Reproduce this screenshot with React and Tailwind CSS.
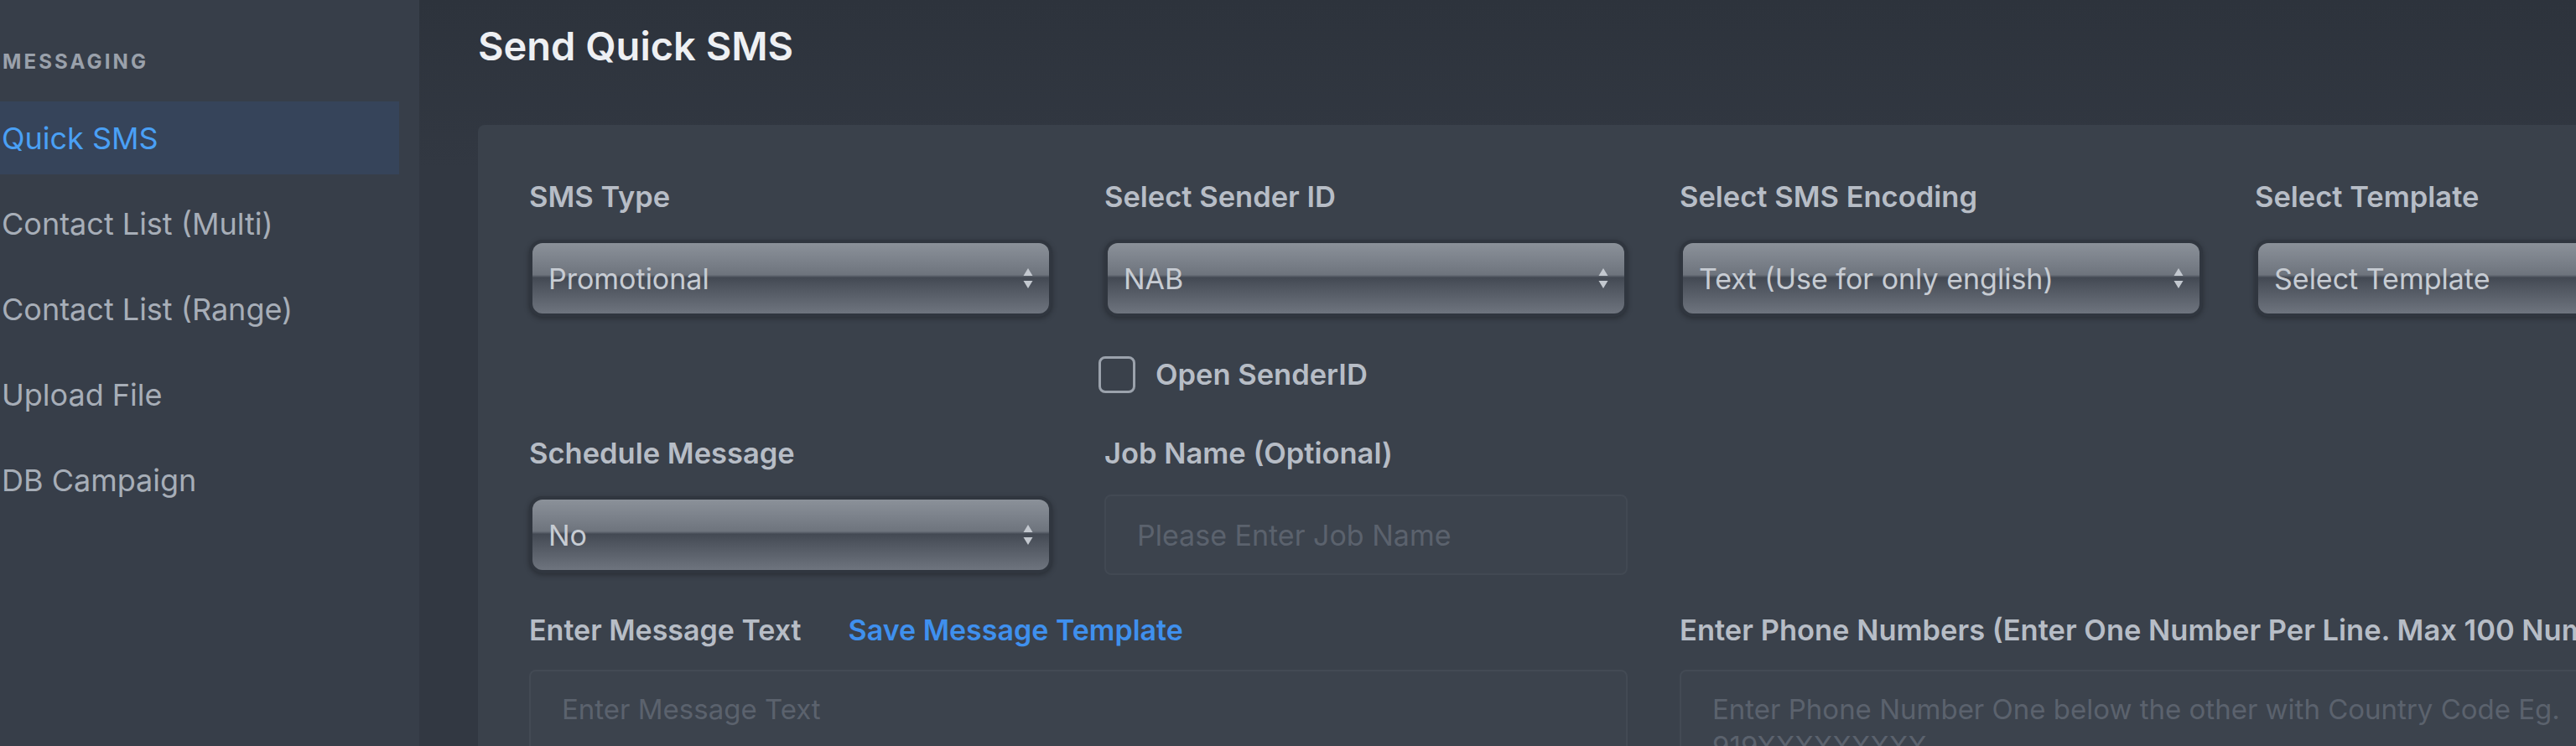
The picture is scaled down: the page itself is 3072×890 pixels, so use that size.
import React from 'react';

const navItems = ['Quick SMS', 'Contact List (Multi)', 'Contact List (Range)', 'Upload File', 'DB Campaign'];

const SelectArrows = () => (
  <svg width="14" height="28" viewBox="0 0 14 28" className="shrink-0">
    <path d="M7 2 L12.5 11 H1.5 Z" fill="#c3c8cf" />
    <path d="M7 26 L12.5 17 H1.5 Z" fill="#c3c8cf" />
  </svg>
);

const GlossySelect = ({ value }) => (
  <div className="h-[92px] rounded-[16px] bg-[#30363f] p-[4px] shadow-[0_2px_6px_rgba(0,0,0,0.3)]">
    <div className="h-full rounded-[12px] bg-[linear-gradient(to_bottom,#8b9199_0%,#7d838c_22%,#6e747d_45%,#434953_49%,#4f555f_62%,#6e747e_100%)] flex items-center justify-between pl-[19px] pr-[18px]">
      <span className="text-[34px] text-[#c7ccd3] whitespace-nowrap">{value}</span>
      <SelectArrows />
    </div>
  </div>
);

const Label = ({ children, className = '' }) => (
  <div className={`text-[34.5px] leading-[40px] font-semibold text-[#b7bdc6] whitespace-nowrap ${className}`}>{children}</div>
);

export default function App() {
  return (
    <div className="flex h-[890px] w-full overflow-hidden font-[Inter,sans-serif] bg-[#30363f]">
      <aside className="w-[500px] shrink-0 bg-[#373e49] pt-[59px]">
        <div className="h-[30px] leading-[30px] pl-[3px] text-[24px] font-bold tracking-[0.13em] text-[#9aa1ab]">MESSAGING</div>
        <nav className="mt-[32px] flex flex-col gap-[15px]">
          {navItems.map((item, i) => (
            <div
              key={item}
              className={`h-[87px] w-[476px] flex items-center pl-[2px] text-[36px] ${
                i === 0 ? 'bg-[#36445a] text-[#4aa0f5]' : 'text-[#a7aeb8]'
              }`}
            >
              {item}
            </div>
          ))}
        </nav>
      </aside>

      <main className="flex-1 min-w-0 pl-[70px] bg-[linear-gradient(to_bottom,#2d333c,#323842_200px)]">
        <h1 className="pt-[31px] text-[47px] leading-[48px] font-semibold text-[#eef0f3] whitespace-nowrap">Send Quick SMS</h1>

        <section className="mt-[70px] w-[2700px] h-[800px] bg-[#3a414b] rounded-tl-[8px] pl-[61px] pt-[66px]">
          {/* row 1 */}
          <div className="grid grid-cols-[repeat(4,624px)] gap-x-[62px]">
            <div>
              <Label>SMS Type</Label>
              <div className="mt-[31px]"><GlossySelect value="Promotional" /></div>
            </div>
            <div>
              <Label>Select Sender ID</Label>
              <div className="mt-[31px]"><GlossySelect value="NAB" /></div>
              <div className="mt-[47px] h-[44px] flex items-center gap-[24px] -ml-[7px]">
                <span className="w-[44px] h-[44px] rounded-[8px] border-[3px] border-[#9ba2ac]" />
                <Label>Open SenderID</Label>
              </div>
            </div>
            <div>
              <Label>Select SMS Encoding</Label>
              <div className="mt-[31px]"><GlossySelect value="Text (Use for only english)" /></div>
            </div>
            <div>
              <Label>Select Template</Label>
              <div className="mt-[31px]"><GlossySelect value="Select Template" /></div>
            </div>
          </div>

          {/* row 2 */}
          <div className="mt-[52px] grid grid-cols-[repeat(4,624px)] gap-x-[62px]">
            <div>
              <Label>Schedule Message</Label>
              <div className="mt-[31px]"><GlossySelect value="No" /></div>
            </div>
            <div>
              <Label>Job Name (Optional)</Label>
              <div className="mt-[29px] h-[96px] rounded-[8px] border-2 border-[#424953] bg-[#3c434d] flex items-center pl-[37px] text-[34px] text-[#5b626d] whitespace-nowrap">
                Please Enter Job Name
              </div>
            </div>
          </div>

          {/* row 3 */}
          <div className="mt-[46px] grid grid-cols-[repeat(4,624px)] gap-x-[62px]">
            <div className="col-span-2">
              <div className="flex items-center gap-[56px]">
                <Label className="text-[34px]">Enter Message Text</Label>
                <span className="text-[34px] leading-[40px] font-semibold text-[#3f90ee] whitespace-nowrap">Save Message Template</span>
              </div>
              <div className="mt-[27px] h-[300px] rounded-[8px] border-2 border-[#434a54] bg-[#3c434d] pl-[37px] pt-[23px] text-[33px] leading-[44px] text-[#5b626d]">
                Enter Message Text
              </div>
            </div>
            <div className="col-span-2">
              <Label>Enter Phone Numbers (Enter One Number Per Line. Max 100 Numbers)</Label>
              <div className="mt-[27px] h-[300px] rounded-[8px] border-2 border-[#434a54] bg-[#3c434d] pl-[37px] pt-[23px] text-[33px] leading-[44px] text-[#5b626d]">
                Enter Phone Number One below the other with Country Code Eg.
                <br />
                919XXXXXXXXX
              </div>
            </div>
          </div>
        </section>
      </main>
    </div>
  );
}
